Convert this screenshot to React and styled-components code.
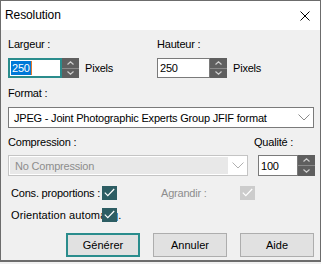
import React from 'react'
import styled, { createGlobalStyle } from 'styled-components'

const Global = createGlobalStyle`
  html, body {
    margin: 0;
    padding: 0;
    background: #f0f0f0;
  }
`

const Window = styled.div`
  box-sizing: border-box;
  width: 321px;
  height: 262px;
  border: 1px solid #6c6c6c;
  border-bottom-width: 2px;
  background: #f0f0f0;
  font-family: "Liberation Sans", Arial, sans-serif;
  font-size: 11px;
  letter-spacing: -0.2px;
  color: #000;
`

const TitleBar = styled.div`
  height: 29px;
  background: #fff;
  display: flex;
  align-items: center;
  justify-content: space-between;
  padding: 0 10px 0 4px;
  font-size: 12px;
  letter-spacing: -0.1px;
`

const Title = styled.span`
  margin-top: -2px;
`

const Body = styled.div`
  padding: 8px 6px 0 7px;
`

const SizeGrid = styled.div`
  display: grid;
  grid-template-columns: 149px 1fr;
`

const Label = styled.div`
  height: 13px;
  line-height: 13px;
  white-space: nowrap;
  color: ${p => (p.$disabled ? '#8d8d8d' : '#000')};
  margin-bottom: ${p => p.$gap ?? 7}px;
`

const SpinRow = styled.div`
  display: flex;
  align-items: center;
`

const NumberBox = styled.div`
  box-sizing: border-box;
  width: ${p => p.$width}px;
  height: ${p => p.$height || 20}px;
  background: #fff;
  border: ${p => (p.$focused ? '2px solid #2a8c8c' : '1px solid #7a7a7a')};
  padding-left: ${p => (p.$focused ? 1 : 2)}px;
  display: flex;
  align-items: center;
`

const Selected = styled.span`
  background: #0078d7;
  color: #fff;
  line-height: 14px;
  padding: 0 1px;
`

const Caret = styled.span`
  width: 1px;
  height: 14px;
  background: #e0782c;
`

const Spinner = styled.div`
  width: 17px;
  height: ${p => p.$height || 20}px;
  display: flex;
  flex-direction: column;
  background: #8a8a8a;
  gap: 1px;
  & > div {
    flex: 1;
    display: flex;
    align-items: center;
    justify-content: center;
    background: #5f5f5f;
  }
`

const Unit = styled.span`
  margin-left: 6px;
`

const Select = styled.div`
  box-sizing: border-box;
  width: ${p => p.$width}px;
  height: ${p => p.$height}px;
  border: 1px solid ${p => (p.$disabled ? '#c4c4c4' : '#7a7a7a')};
  background: #fff;
  display: flex;
  align-items: stretch;
  margin-bottom: ${p => p.$gap || 0}px;
`

const SelectText = styled.div`
  flex: 1;
  display: flex;
  align-items: center;
  padding-left: 5px;
  color: ${p => (p.$disabled ? '#8d8d8d' : '#000')};
  background: ${p => (p.$disabled ? '#e8e8e8' : '#fff')};
  margin: ${p => (p.$disabled ? '1px 0 1px 1px' : '0')};
`

const Chevron = styled.div`
  width: 19px;
  display: flex;
  align-items: center;
  justify-content: center;
`

const CompGrid = styled.div`
  display: grid;
  grid-template-columns: 246px 1fr;
`

const QualBox = styled.div`
  padding-left: 4px;
  display: flex;
`

const CheckRow = styled.div`
  display: flex;
  align-items: center;
  height: 15px;
  margin-top: ${p => p.$top}px;
`

const CheckLabel = styled.span`
  width: ${p => p.$width}px;
  flex: none;
  padding-left: ${p => p.$pad || 0}px;
  margin-left: ${p => p.$left || 0}px;
  white-space: nowrap;
  overflow: visible;
  letter-spacing: ${p => (p.$wide ? '0.1px' : 'inherit')};
  color: ${p => (p.$disabled ? '#8d8d8d' : '#000')};
  box-sizing: border-box;
`

const Check = styled.span`
  position: relative;
  z-index: 1;
  box-sizing: border-box;
  width: 15px;
  height: 14px;
  display: flex;
  align-items: center;
  justify-content: center;
  background: ${p => (p.$disabled ? '#cccccc' : '#2d5d63')};
`

const Buttons = styled.div`
  display: flex;
  justify-content: flex-end;
  gap: 13px;
  margin-top: 11px;
`

const Button = styled.button`
  box-sizing: border-box;
  width: 74px;
  height: 24px;
  padding: 0;
  font: inherit;
  color: #000;
  background: #e1e1e1;
  border: ${p => (p.$primary ? '2px solid #2a8c8c' : '1px solid #adadad')};
`

const Up = () => (
  <svg width="7" height="4" viewBox="0 0 7 4">
    <path d="M0.5 3.5 L3.5 0.8 L6.5 3.5" fill="none" stroke="#d0d0d0" strokeWidth="1.2" />
  </svg>
)

const Down = () => (
  <svg width="7" height="4" viewBox="0 0 7 4">
    <path d="M0.5 0.5 L3.5 3.2 L6.5 0.5" fill="none" stroke="#d0d0d0" strokeWidth="1.2" />
  </svg>
)

const Spin = ({ height }) => (
  <Spinner $height={height}>
    <div><Up /></div>
    <div><Down /></div>
  </Spinner>
)

const DropArrow = ({ color }) => (
  <svg width="12" height="7" viewBox="0 0 12 7">
    <path d="M0.5 0.5 L6 6 L11.5 0.5" fill="none" stroke={color} strokeWidth="1" />
  </svg>
)

const Tick = ({ color }) => (
  <svg width="11" height="9" viewBox="0 0 11 9">
    <path d="M0.8 4.6 L3.8 7.6 L10.2 1" fill="none" stroke={color} strokeWidth="1.2" />
  </svg>
)

export default function App() {
  return (
    <>
      <Global />
      <Window>
        <TitleBar>
          <Title>Resolution</Title>
          <svg width="10" height="10" viewBox="0 0 10 10">
            <path d="M0.5 0.5 L9.5 9.5 M9.5 0.5 L0.5 9.5" stroke="#000" strokeWidth="1" />
          </svg>
        </TitleBar>
        <Body>
          <SizeGrid>
            <div>
              <Label>Largeur :</Label>
              <SpinRow>
                <NumberBox $width={54} $focused>
                  <Selected>250</Selected>
                  <Caret />
                </NumberBox>
                <Spin />
                <Unit>Pixels</Unit>
              </SpinRow>
            </div>
            <div>
              <Label>Hauteur :</Label>
              <SpinRow>
                <NumberBox $width={53}>250</NumberBox>
                <Spin />
                <Unit>Pixels</Unit>
              </SpinRow>
            </div>
          </SizeGrid>

          <Label style={{ marginTop: 9 }}>Format :</Label>
          <Select $width={306} $height={21} $gap={8}>
            <SelectText>JPEG - Joint Photographic Experts Group JFIF format</SelectText>
            <Chevron><DropArrow color="#8a8a8a" /></Chevron>
          </Select>

          <CompGrid>
            <div>
              <Label $gap={6}>Compression :</Label>
              <Select $width={240} $height={21} $disabled>
                <SelectText $disabled>No Compression</SelectText>
                <Chevron><DropArrow color="#b0b0b0" /></Chevron>
              </Select>
            </div>
            <div>
              <Label $gap={6}>Qualité :</Label>
              <QualBox>
                <NumberBox $width={40} $height={21}>100</NumberBox>
                <Spin height={21} />
              </QualBox>
            </div>
          </CompGrid>

          <CheckRow $top={9}>
            <CheckLabel $width={94} $pad={3}>Cons. proportions :</CheckLabel>
            <Check><Tick color="#fff" /></Check>
            <CheckLabel $width={79} $left={44} $disabled>Agrandir :</CheckLabel>
            <Check $disabled><Tick color="#fff" /></Check>
          </CheckRow>
          <CheckRow $top={7}>
            <CheckLabel $width={94} $pad={3} $wide>Orientation automatiq.</CheckLabel>
            <Check><Tick color="#fff" /></Check>
          </CheckRow>

          <Buttons>
            <Button $primary>Générer</Button>
            <Button>Annuler</Button>
            <Button>Aide</Button>
          </Buttons>
        </Body>
      </Window>
    </>
  )
}
